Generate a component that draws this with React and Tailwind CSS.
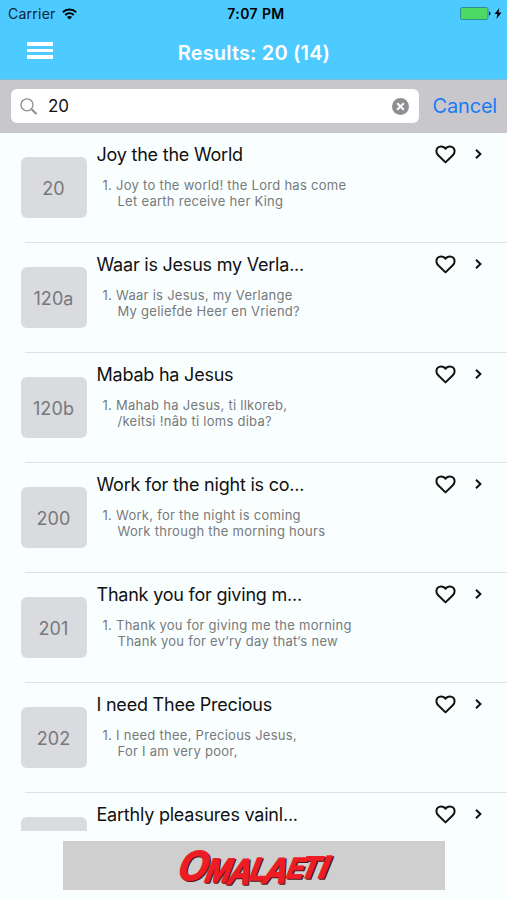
import React, { useState } from 'react';

const songs = [
  { number: '20', title: 'Joy the the World', lines: ['Joy to the world! the Lord has come', 'Let earth receive her King'] },
  { number: '120a', title: 'Waar is Jesus my Verla...', lines: ['Waar is Jesus, my Verlange', 'My geliefde Heer en Vriend?'] },
  { number: '120b', title: 'Mabab ha Jesus', lines: ['Mahab ha Jesus, ti llkoreb,', '/keitsi !nâb ti loms diba?'] },
  { number: '200', title: 'Work for the night is co...', lines: ['Work, for the night is coming', 'Work through the morning hours'] },
  { number: '201', title: 'Thank you for giving m...', lines: ['Thank you for giving me the morning', 'Thank you for ev‘ry day that‘s new'] },
  { number: '202', title: 'I need Thee Precious', lines: ['I need thee, Precious Jesus,', 'For I am very poor,'] },
  { number: '', title: 'Earthly pleasures vainl...', lines: [] },
];

const logoLetters = [
  { char: 'O', x: 27, y: 45, size: 42, width: 29 },
  { char: 'M', x: 55, y: 47, size: 34, width: 25 },
  { char: 'A', x: 78, y: 49, size: 36, width: 23 },
  { char: 'L', x: 99, y: 45, size: 32, width: 18 },
  { char: 'A', x: 113, y: 48, size: 36, width: 24 },
  { char: 'E', x: 136, y: 43, size: 29, width: 17 },
  { char: 'T', x: 150, y: 43, size: 31, width: 18 },
  { char: 'I', x: 168, y: 43, size: 32, width: 9 },
];

function LogoWord({ className }) {
  return (
    <text className={className} strokeWidth="1.4" strokeLinejoin="round">
      {logoLetters.map((l, i) => (
        <tspan key={i} x={l.x} y={l.y} fontSize={l.size} textLength={l.width} lengthAdjust="spacingAndGlyphs">
          {l.char}
        </tspan>
      ))}
    </text>
  );
}

function StatusBar() {
  return (
    <div className="flex h-7 items-center justify-between pl-2 pr-[5px] text-black">
      <div className="mb-px flex w-[120px] items-center gap-[6px]">
        <span className="text-[14px] tracking-[0.25px] text-[#123]">Carrier</span>
        <svg width="15" height="12" viewBox="0 0 15 12" fill="none" stroke="currentColor" strokeWidth="2">
          <path d="M0.8 4.2C4.6 0.6 10.4 0.6 14.2 4.2" />
          <path d="M3.2 7C5.7 4.7 9.3 4.7 11.8 7" />
          <path d="M7.5 11.6L4.9 8.9C6.4 7.6 8.6 7.6 10.1 8.9Z" fill="currentColor" stroke="none" />
        </svg>
      </div>
      <span className="mb-px pl-[2px] text-[14px] font-semibold tracking-[0.4px]">7:07 PM</span>
      <div className="mb-px flex w-[120px] items-center justify-end gap-[3px]">
        <svg width="31" height="13" viewBox="0 0 31 13">
          <rect x="0.5" y="0.5" width="27.5" height="12" rx="1.8" fill="#4cd964" stroke="#2f8d8d" />
          <path d="M29 4.5C31 5 31 8 29 8.5Z" fill="#123" />
        </svg>
        <svg width="8" height="11" viewBox="0 0 8 11" fill="currentColor">
          <path d="M5.4 0L0.6 6H3.4L2.4 11L7.5 4.6H4.5Z" />
        </svg>
      </div>
    </div>
  );
}

function SongRow({ song }) {
  return (
    <li className="flex h-[110px] shrink-0 pl-[20.5px]">
      <div className="mt-6 flex h-[61px] w-[66px] shrink-0 items-center justify-center rounded-md bg-[#dadbdf] pt-px text-[18px] tracking-[0.1px] text-[#77787b]">
        {song.number}
      </div>
      <div className="ml-[10px] grow pt-[8px]">
        <div className="flex h-[26px] items-center">
          <h2 className="grow whitespace-nowrap text-[18px] tracking-[-0.22px] text-[#111]">{song.title}</h2>
          <svg className="mr-[19.5px]" width="21" height="19" viewBox="0 0 21 19" fill="none" stroke="#111" strokeWidth="2" strokeLinejoin="round">
            <path d="M10.5 17.4L3.2 10.2C1.9 8.9 1.4 7.7 1.4 6.2C1.4 3.4 3.5 1.4 6.1 1.4C7.9 1.4 9.6 2.3 10.5 3.8C11.4 2.3 13.1 1.4 14.9 1.4C17.5 1.4 19.6 3.4 19.6 6.2C19.6 7.7 19.1 8.9 17.8 10.2Z" />
          </svg>
          <svg className="mr-[25px]" width="7" height="10" viewBox="0 0 7 10" fill="none" stroke="#111" strokeWidth="2">
            <path d="M1 0.8L5.4 5L1 9.2" />
          </svg>
        </div>
        <div className="mt-[10px] pl-[6px] text-[13px] leading-4 tracking-[0.27px] text-[#77797b]">
          {song.lines.length > 0 && (
            <>
              <p>1. {song.lines[0]}</p>
              <p className="pl-[15px]">{song.lines[1]}</p>
            </>
          )}
        </div>
      </div>
    </li>
  );
}

export default function App() {
  const [query, setQuery] = useState('20');

  return (
    <div className="flex h-[900px] w-[507px] flex-col overflow-hidden bg-[#f9ffff] font-['Inter',sans-serif]">
      <header className="h-20 shrink-0 border-b border-[#82bcd9] bg-[#4dcaff]">
        <StatusBar />
        <div className="flex h-[50px] items-center pl-[27px]">
          <div className="mb-[5px] flex w-[26px] flex-col gap-[3px]">
            <span className="h-[3.5px] bg-white" />
            <span className="h-[3.5px] bg-white" />
            <span className="h-[3.5px] bg-white" />
          </div>
          <h1 className="grow pb-px pr-[52px] text-center text-[20px] font-semibold tracking-[0.15px] text-white">Results: 20 (14)</h1>
        </div>
      </header>

      {/* Search */}
      <div className="flex h-[53px] shrink-0 items-center bg-[#c8c7cc] pb-px pl-[11px] pr-[10px]">
        <div className="flex h-[34px] w-[408px] items-center rounded-md bg-white pl-[9px] pr-[10px]">
          <svg width="18" height="17" viewBox="0 0 18 17" fill="none" stroke="#8e8e93">
            <circle cx="7" cy="6.8" r="6" strokeWidth="1.3" />
            <path d="M11.5 11.2L16.6 16" strokeWidth="2" />
          </svg>
          <input
            className="ml-[10px] min-w-0 grow pt-px text-[17px] text-[#111] outline-none"
            value={query}
            onChange={(e) => setQuery(e.target.value)}
          />
          <button type="button" onClick={() => setQuery('')}>
            <svg width="17" height="17" viewBox="0 0 17 17">
              <circle cx="8.5" cy="8.5" r="8.5" fill="#8e8e93" />
              <path d="M5.2 5.2L11.8 11.8M11.8 5.2L5.2 11.8" stroke="white" strokeWidth="2" />
            </svg>
          </button>
        </div>
        <button type="button" className="ml-auto pb-px text-[20px] tracking-[-0.2px] text-[#187cf8]">Cancel</button>
      </div>

      {/* Results */}
      <ul className="flex h-[698px] shrink-0 flex-col overflow-hidden">
        {songs.map((song, i) => (
          <React.Fragment key={i}>
            {i > 0 && <li className="-mt-px ml-[25px] h-px shrink-0 bg-[#dde3e4]" />}
            <SongRow song={song} />
          </React.Fragment>
        ))}
      </ul>

      {/* Banner */}
      <div className="ml-[63px] mt-[10px] flex h-[49px] w-[382px] shrink-0 justify-center bg-[#cfcfcf]">
        <svg
          className="-mt-[6px] shrink-0 overflow-visible font-['Liberation_Sans',sans-serif] font-bold italic"
          width="190"
          height="60"
          viewBox="0 0 190 60"
        >
          <g transform="skewX(-12)">
            <LogoWord className="translate-x-[1.5px] translate-y-[1px] fill-[#4a1518] stroke-[#4a1518]" />
            <LogoWord className="fill-[#ee1c25] stroke-[#ee1c25]" />
          </g>
        </svg>
      </div>
    </div>
  );
}
